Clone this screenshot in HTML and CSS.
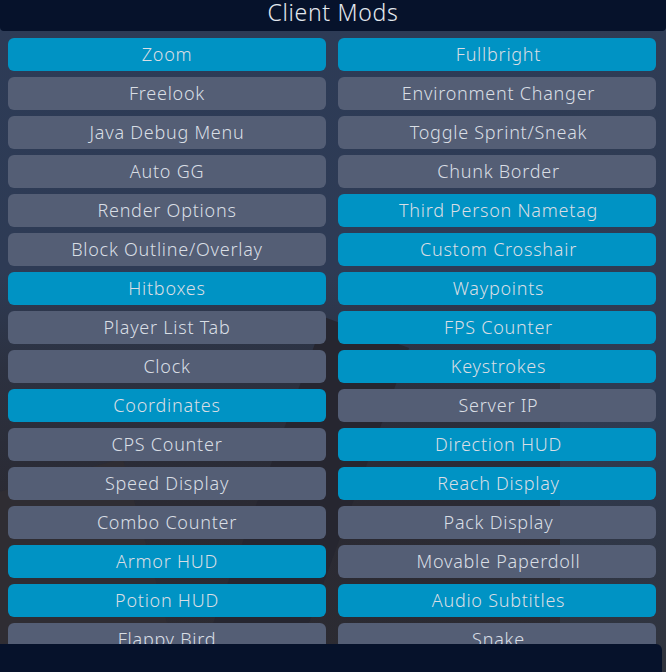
FILE: index.html
```html
<!DOCTYPE html>
<html>
<head>
<meta charset="utf-8">
<link rel="stylesheet" href="styles.css">
</head>
<body>
<div class="screen">
  <div class="bg">
    <div class="streak s1"></div>
    <div class="streak s2"></div>
    <div class="streak s3"></div>
  </div>
  <header class="title">Client Mods</header>
  <main class="grid">
    <div class="mod on">Zoom</div>
    <div class="mod on">Fullbright</div>
    <div class="mod">Freelook</div>
    <div class="mod">Environment Changer</div>
    <div class="mod">Java Debug Menu</div>
    <div class="mod">Toggle Sprint/Sneak</div>
    <div class="mod">Auto GG</div>
    <div class="mod">Chunk Border</div>
    <div class="mod">Render Options</div>
    <div class="mod on">Third Person Nametag</div>
    <div class="mod">Block Outline/Overlay</div>
    <div class="mod on">Custom Crosshair</div>
    <div class="mod on">Hitboxes</div>
    <div class="mod on">Waypoints</div>
    <div class="mod">Player List Tab</div>
    <div class="mod on">FPS Counter</div>
    <div class="mod">Clock</div>
    <div class="mod on">Keystrokes</div>
    <div class="mod on">Coordinates</div>
    <div class="mod">Server IP</div>
    <div class="mod">CPS Counter</div>
    <div class="mod on">Direction HUD</div>
    <div class="mod">Speed Display</div>
    <div class="mod on">Reach Display</div>
    <div class="mod">Combo Counter</div>
    <div class="mod">Pack Display</div>
    <div class="mod on">Armor HUD</div>
    <div class="mod">Movable Paperdoll</div>
    <div class="mod on">Potion HUD</div>
    <div class="mod on">Audio Subtitles</div>
    <div class="mod">Flappy Bird</div>
    <div class="mod">Snake</div>
  </main>
  <footer class="footer"></footer>
</div>
</body>
</html>
```

FILE: styles.css
```css
html, body {
  margin: 0;
  padding: 0;
}
body {
  width: 666px;
  height: 672px;
  overflow: hidden;
  background: #2c3953;
  font-family: "Noto Sans", "Open Sans", sans-serif;
}
.screen {
  position: relative;
  width: 666px;
  height: 672px;
  overflow: hidden;
  display: flex;
  flex-direction: column;
}
.bg {
  position: absolute;
  inset: 0;
  background: linear-gradient(180deg, #2d3b56 0%, #2e3b55 40%, #2c3140 55%, #2a2a33 75%, #2c2b32 100%);
  overflow: hidden;
}
.streak {
  position: absolute;
  transform-origin: center;
}
.s1 {
  left: 250px; top: 320px; width: 90px; height: 420px;
  background: #262630;
  transform: rotate(20deg);
}
.s2 {
  left: 560px; top: 0; width: 140px; height: 672px;
  background: linear-gradient(180deg, #2f3c55 0%, #2f3b52 60%, #30333c 100%);
}
.s3 {
  left: -40px; top: 480px; width: 200px; height: 260px;
  background: #2f2d33;
  transform: rotate(-15deg);
}
.title {
  position: relative;
  height: 31px;
  flex: none;
  background: #06122b;
  border-radius: 0 0 4px 4px;
  color: #e3e8ee;
  font-size: 23px;
  font-weight: 300;
  letter-spacing: 0.7px;
  line-height: 25px;
  text-align: center;
}
.grid {
  position: relative;
  flex: 1;
  display: grid;
  grid-template-columns: 318px 318px;
  grid-auto-rows: 33px;
  column-gap: 12px;
  row-gap: 6px;
  padding: 7px 0 0 8px;
  overflow: hidden;
}
.mod {
  border-radius: 6px;
  background: #545e75;
  color: #d9dee5;
  font-size: 18px;
  font-weight: 300;
  line-height: 33px;
  text-align: center;
  letter-spacing: 0.75px;
  white-space: nowrap;
}
.mod:nth-child(even) {
  padding-left: 3px;
}
.mod.on {
  background: #0093c4;
}
.footer {
  position: relative;
  flex: none;
  height: 28px;
  background: #06122b;
  border-radius: 0 6px 0 0;
  margin-right: 4px;
}
```
